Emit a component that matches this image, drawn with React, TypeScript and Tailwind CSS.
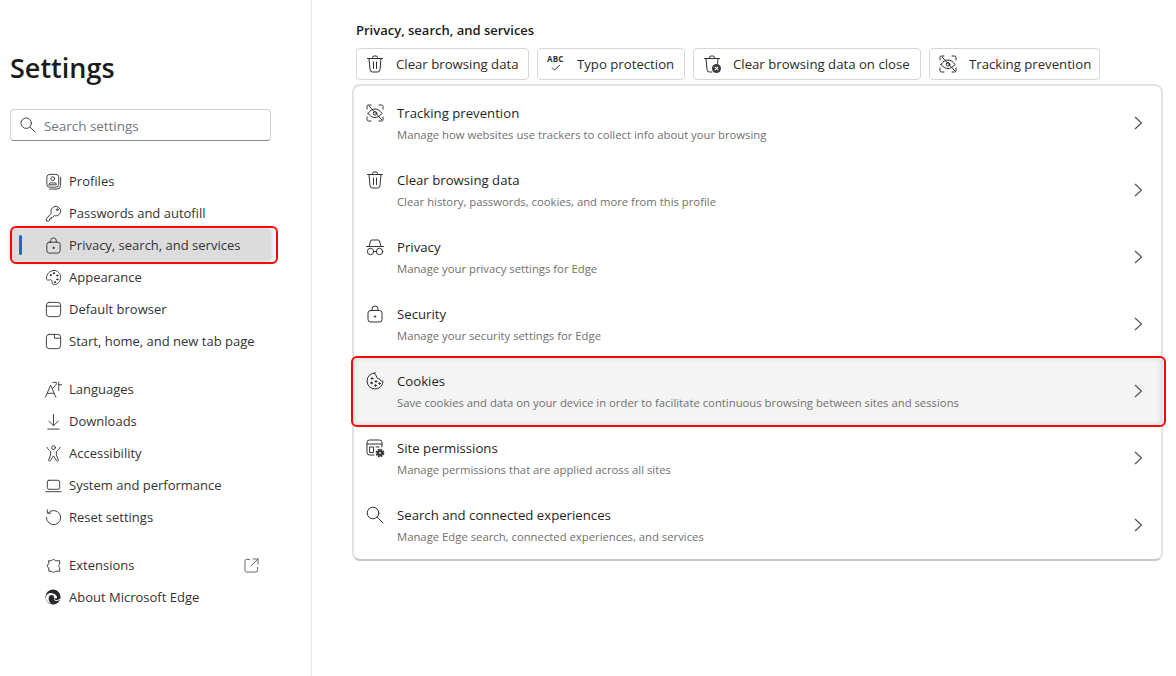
import { ReactNode } from "react";

const stroke = { fill: "none", stroke: "currentColor", strokeWidth: 1, strokeLinecap: "round" as const, strokeLinejoin: "round" as const };

function Ico({ children, size = 20 }: { children: ReactNode; size?: number }) {
  return (
    <svg width={size} height={size} viewBox="0 0 20 20" className="shrink-0" {...stroke}>
      {children}
    </svg>
  );
}

const ProfileIcon = () => (
  <Ico>
    <rect x="3" y="2.500" width="12.500" height="13.500" rx="3" />
    <path d="M17.500 5.500v8.500a4 4 0 0 1-4 4H6" />
    <circle cx="9.200" cy="7" r="2" />
    <path d="M5.500 13.500v-.5a1.500 1.500 0 0 1 1.500-1.500h4.500a1.500 1.500 0 0 1 1.500 1.500v.5H5.500z" />
  </Ico>
);
const KeyIcon = () => (
  <Ico>
    <path d="M12.500 2.500a5 5 0 0 1 0 10c-.6 0-1.100-.1-1.600-.3L9 14H7.500v1.500H6V17l-1 1H2.500v-2.500l5.300-5.800a5 5 0 0 1 4.700-7.200z" />
    <circle cx="14" cy="6" r="1" />
  </Ico>
);
const LockIcon = () => (
  <Ico>
    <rect x="3" y="6.500" width="14" height="11.500" rx="2.500" />
    <path d="M7 6.500V5a3 3 0 0 1 6 0v1.500" />
    <circle cx="10" cy="12.500" r=".7" fill="currentColor" />
  </Ico>
);
const PaletteIcon = () => (
  <Ico>
    <path d="M10.500 2.500c4 0 7 3.200 7 7.300 0 4.200-3 7.700-6.500 7.700-2.300 0-2.500-1.500-2.500-3 0-1.800-1-2.500-2.500-2-1.800.6-3.500.3-3.500-1.500 0-4.500 3.500-8.500 8.500-8.500z" />
    <circle cx="7" cy="7.500" r=".7" fill="currentColor" />
    <circle cx="10.500" cy="5.500" r=".7" fill="currentColor" />
    <circle cx="14" cy="8" r=".7" fill="currentColor" />
    <circle cx="14" cy="12" r=".7" fill="currentColor" />
    <circle cx="11.500" cy="15" r=".7" fill="currentColor" />
  </Ico>
);
const BrowserIcon = () => (
  <Ico>
    <rect x="2.500" y="2.500" width="15" height="15" rx="3" />
    <path d="M2.500 6.500h15" />
  </Ico>
);
const TabIcon = () => (
  <Ico>
    <path d="M5.500 2.500H11v4h6.500v8a3 3 0 0 1-3 3h-9a3 3 0 0 1-3-3v-9a3 3 0 0 1 3-3z" />
    <path d="M11 2.500h3.500a3 3 0 0 1 3 3v1" />
  </Ico>
);
const LangIcon = () => (
  <Ico>
    <path d="M1.500 18 7 5.500 12.500 18M3.500 14h7" />
    <path d="M9.500 2.500h3.500v1.500c0 1.500-2 2.500-3.500 4.500M15.500 2v9M15.500 5h3" />
  </Ico>
);
const DownIcon = () => (
  <Ico>
    <path d="M10 2.500v11.500M5 9.500l5 5 5-5M4 18h12" />
  </Ico>
);
const AccessIcon = () => (
  <Ico>
    <circle cx="10" cy="3.800" r="2" />
    <path d="M3 3.500c1 2 3 3.500 4 4.500v3.500L5 16.500c-.5 1.500 1 2 1.800 1L10 12.500l3.200 5c.8 1 2.300.5 1.800-1L13 11.500V8c1-1 3-2.500 4-4.500" />
  </Ico>
);
const LaptopIcon = () => (
  <Ico>
    <rect x="3.500" y="4.500" width="13" height="9.500" rx="1.800" />
    <path d="M2 16.500h16" />
  </Ico>
);
const ResetIcon = () => (
  <Ico>
    <path d="M4.500 5A7.500 7.500 0 1 1 2.500 10" />
    <path d="M3.500 2v3.500H7" />
  </Ico>
);
const PuzzleIcon = () => (
  <Ico>
    <path d="M5 5h3a2.200 2.200 0 0 1 4 0h4.500v3.500a2 2 0 0 0 0 3.500V16H12a2.200 2.200 0 0 1-4 0H5v-3.500a2.400 2.400 0 0 1 0-4.500z" />
  </Ico>
);
const EdgeIcon = () => (
  <svg width="16" height="16" viewBox="0 0 20 20" className="shrink-0">
    <circle cx="10" cy="10" r="9.500" fill="#26282b" />
    <path d="M.8 11C1.800 6.500 5 4.800 8.500 5.200c3.800.4 6.500 2.800 6.500 5.300 0 1-1 1.500-2 1.500-1.500 0-2-1-2-1.500 1-1.500-.5-3-2.500-3-2.500 0-4 2-4 4.500 0 2.500 1.500 5 3.500 6.500-3.500-.5-6.700-3.500-7.200-7.500z" fill="#fff" />
    <path d="M11 13c2 2 5.500 2 8-.5" stroke="#fff" strokeWidth="1.200" fill="none" />
  </svg>
);
const ExternalIcon = () => (
  <svg width="15" height="15" viewBox="0 0 16 16" fill="none" stroke="#5f5f5f" strokeWidth="1" strokeLinecap="round" className="shrink-0">
    <path d="M6 1.500H3A2 2 0 0 0 1 3.500v9.500a2 2 0 0 0 2 2h9.500a2 2 0 0 0 2-2V10" />
    <path d="M9.500 1H15v5.500M15 1 7.500 8.500" />
  </svg>
);
const TrashIcon = () => (
  <Ico>
    <path d="M2.500 4.500h15M7.500 4.500V3.500a1.500 1.500 0 0 1 1.500-1.500h2a1.500 1.500 0 0 1 1.500 1.500v1" />
    <path d="M4 4.500 5 15.500a2.500 2.500 0 0 0 2.500 2.500h5a2.500 2.500 0 0 0 2.500-2.500l1-11" />
    <path d="M8.500 8v6.500M11.500 8v6.500" />
  </Ico>
);
const TrashCloseIcon = () => (
  <svg width="20" height="20" viewBox="0 0 20 20" className="shrink-0">
    <g {...stroke}>
      <path d="M2.500 4.500h15M7.500 4.500V3.500a1.500 1.500 0 0 1 1.500-1.500h2a1.500 1.500 0 0 1 1.500 1.500v1" />
      <path d="M4 4.500 5 15.500a2.500 2.500 0 0 0 2.500 2.500H10M16 4.500l-.4 5" />
    </g>
    <circle cx="14.500" cy="14.500" r="4.500" fill="#3a3a3a" />
    <path d="m12.800 12.800 3.400 3.400m0-3.400-3.400 3.400" stroke="#fff" strokeWidth="1.100" />
  </svg>
);
const AbcIcon = () => (
  <span className="relative block h-[18px] w-[18px] shrink-0 text-[#333]">
    <span className="absolute -top-[1px] left-0 text-[8px] font-bold leading-[10px] tracking-[0.2px]">ABC</span>
    <svg width="10" height="7" viewBox="0 0 10 7" fill="none" stroke="currentColor" strokeWidth="1" className="absolute left-[4px] top-[9px]">
      <path d="m1 3.500 2.500 2.500L9 1" />
    </svg>
  </span>
);
const TrackIcon = () => (
  <Ico>
    <path d="M2 6V3.500A1.500 1.500 0 0 1 3.500 2H6M14 2h2.500A1.500 1.500 0 0 1 18 3.500V6M2 14v2.500A1.500 1.500 0 0 0 3.500 18H6M14 18h2.500a1.500 1.500 0 0 0 1.500-1.500V14" />
    <path d="M3 10.500c2-3 4.500-4.500 7-4.500s5 1.500 7 4.500c-2 2.500-4.500 4-7 4s-5-1.500-7-4z" />
    <circle cx="10" cy="10.300" r="1.800" />
    <path d="m4 3 13 14" />
  </Ico>
);
const SpyIcon = () => (
  <Ico>
    <path d="M4 9.500 5.500 4a1.500 1.500 0 0 1 1.500-1h6a1.500 1.500 0 0 1 1.500 1L16 9.500M1.500 9.500h17" />
    <circle cx="5.500" cy="14.500" r="3.200" />
    <circle cx="14.500" cy="14.500" r="3.200" />
    <path d="M8.700 14.500h2.600" />
  </Ico>
);
const CookieIcon = () => (
  <Ico>
    <path d="M10 2a8 8 0 1 0 8 8c-1.800.3-3.200-.5-3.500-2.200-1.800.2-3.200-1-3-3C10 4.500 9.700 3.200 10 2z" />
    <circle cx="7" cy="7.500" r=".8" fill="currentColor" />
    <circle cx="6.500" cy="12" r=".8" fill="currentColor" />
    <circle cx="11" cy="10.500" r=".8" fill="currentColor" />
    <circle cx="10.500" cy="14.500" r=".8" fill="currentColor" />
    <circle cx="14.500" cy="12.500" r=".8" fill="currentColor" />
  </Ico>
);
const SiteIcon = () => (
  <svg width="20" height="20" viewBox="0 0 20 20" className="shrink-0">
    <g {...stroke}>
      <path d="M9 17H4.500A2.500 2.500 0 0 1 2 14.500v-10A2.500 2.500 0 0 1 4.500 2h10A2.500 2.500 0 0 1 17 4.500V9M2 6h15" />
      <rect x="5" y="9" width="3.500" height="5.500" />
      <path d="M11 9h3" />
    </g>
    <circle cx="15" cy="15" r="3.200" fill="none" stroke="#333" strokeWidth="2.200" strokeDasharray="1.800 .7" />
    <circle cx="15" cy="15" r="2.800" fill="#333" />
    <circle cx="15" cy="15" r=".9" fill="#fff" />
  </svg>
);
const SearchIcon = ({ size = 18 }: { size?: number }) => (
  <Ico size={size}>
    <circle cx="8" cy="8" r="5.800" />
    <path d="m12.300 12.300 5.700 5.700" />
  </Ico>
);
const Chevron = () => (
  <svg width="9" height="14" viewBox="0 0 9 14" fill="none" stroke="#555" strokeWidth="1.200" className="shrink-0">
    <path d="m1 1 6.500 6L1 13" />
  </svg>
);

type NavItem = { label: string; icon: ReactNode; active?: boolean; external?: boolean };

const navGroups: NavItem[][] = [
  [
    { label: "Profiles", icon: <ProfileIcon /> },
    { label: "Passwords and autofill", icon: <KeyIcon /> },
    { label: "Privacy, search, and services", icon: <LockIcon />, active: true },
    { label: "Appearance", icon: <PaletteIcon /> },
    { label: "Default browser", icon: <BrowserIcon /> },
    { label: "Start, home, and new tab page", icon: <TabIcon /> },
  ],
  [
    { label: "Languages", icon: <LangIcon /> },
    { label: "Downloads", icon: <DownIcon /> },
    { label: "Accessibility", icon: <AccessIcon /> },
    { label: "System and performance", icon: <LaptopIcon /> },
    { label: "Reset settings", icon: <ResetIcon /> },
  ],
  [
    { label: "Extensions", icon: <PuzzleIcon />, external: true },
    { label: "About Microsoft Edge", icon: <EdgeIcon /> },
  ],
];

const chips = [
  { label: "Clear browsing data", icon: <TrashIcon />, w: "w-[173px]" },
  { label: "Typo protection", icon: <AbcIcon />, w: "w-[148px]" },
  { label: "Clear browsing data on close", icon: <TrashCloseIcon />, w: "w-[228px]" },
  { label: "Tracking prevention", icon: <TrackIcon />, w: "w-[171px]" },
];

const rows = [
  { title: "Tracking prevention", desc: "Manage how websites use trackers to collect info about your browsing", icon: <TrackIcon /> },
  { title: "Clear browsing data", desc: "Clear history, passwords, cookies, and more from this profile", icon: <TrashIcon /> },
  { title: "Privacy", desc: "Manage your privacy settings for Edge", icon: <SpyIcon /> },
  { title: "Security", desc: "Manage your security settings for Edge", icon: <LockIcon /> },
  { title: "Cookies", desc: "Save cookies and data on your device in order to facilitate continuous browsing between sites and sessions", icon: <CookieIcon />, active: true },
  { title: "Site permissions", desc: "Manage permissions that are applied across all sites", icon: <SiteIcon /> },
  { title: "Search and connected experiences", desc: "Manage Edge search, connected experiences, and services", icon: <SearchIcon size={20} /> },
];

export default function App() {
  return (
    <div className="flex h-[676px] w-[1176px] overflow-hidden bg-white font-['Open_Sans',sans-serif] text-[13px] text-[#333]">
      <aside className="w-[312px] shrink-0 border-r border-[#ebebeb] pt-[48px]">
        <h1 className="ml-[10px] h-[40px] text-[27px] font-semibold leading-[40px] text-[#1b1b1b]">Settings</h1>
        <div className="ml-[10px] mt-[21px] flex h-[32px] w-[261px] items-center gap-[7px] rounded-[4px] border border-[#cfcfcf] border-b-[#8a8a8a] pl-[8px]">
          <span className="text-[#333]"><SearchIcon /></span>
          <span className="pt-[2px] text-[13.4px] text-[#6e7782]">Search settings</span>
        </div>
        <nav className="ml-[12px] mt-[24px] flex w-[259px] flex-col gap-[16px]">
          {navGroups.map((group, i) => (
            <div key={i} className="flex flex-col">
              {group.map((item) => (
                <div
                  key={item.label}
                  className={`relative flex h-[32px] items-center pl-[33px] pr-[12px] ${item.active ? "rounded-[4px] bg-[#dcdcdc] shadow-[0_0_6px_rgba(0,0,0,0.25)]" : ""}`}
                >
                  {item.active && (
                    <>
                      <span className="absolute left-[7px] top-[6px] h-[20px] w-[3px] rounded-[2px] bg-[#2563d9]" />
                      <span className="absolute -bottom-[3px] -left-[2px] -right-[7px] -top-[3px] rounded-[6px] border-2 border-[#f60808]" />
                    </>
                  )}
                  <span className="flex w-[16px] justify-center text-[#3a3a3a] [&>svg:not([width='16'])]:h-[19px] [&>svg:not([width='16'])]:w-[19px]">{item.icon}</span>
                  <span className="ml-[8px] flex-1 whitespace-nowrap pt-[2px]">{item.label}</span>
                  {item.external && <ExternalIcon />}
                </div>
              ))}
            </div>
          ))}
        </nav>
      </aside>

      <main className="flex-1 pl-[40px] pt-[20px]">
        <h2 className="ml-[4px] h-[20px] text-[13px] font-semibold leading-[20px] text-[#1b1b1b]">Privacy, search, and services</h2>
        <div className="ml-[4px] mt-[8px] flex gap-[8px]">
          {chips.map((chip) => (
            <div key={chip.label} className={`flex h-[32px] items-center gap-[12px] rounded-[4px] border border-[#d6d6d6] pl-[9px] text-[13.2px] text-[#2b2b2b] ${chip.w}`}>
              <span className="flex w-[18px] justify-center">{chip.icon}</span>
              <span className="whitespace-nowrap pt-[2px]">{chip.label}</span>
            </div>
          ))}
        </div>
        <section className="mt-[4px] w-[811px] rounded-[8px] border-2 border-[#e3e3e3] border-b-[#c8c8c8] pt-[4px]">
          {rows.map((row) => (
            <div key={row.title} className={`relative flex h-[67px] items-start pl-[12px] pr-[18px] ${row.active ? "rounded-[4px] bg-[#f4f4f4] shadow-[inset_0_0_5px_rgba(0,0,0,0.12)]" : ""}`}>
              {row.active && <span className="absolute -bottom-[2px] -left-[3px] -right-[5px] -top-[2px] rounded-[6px] border-2 border-[#f60808]" />}
              <span className="mt-[13px] flex w-[18px] justify-center text-[#333]">{row.icon}</span>
              <div className="ml-[13px] flex-1 pt-[13px]">
                <div className="h-[20px] text-[13.2px] leading-[20px] text-[#1f1f1f]">{row.title}</div>
                <div className="mt-[2px] h-[20px] text-[11.3px] leading-[20px] text-[#707070]">{row.desc}</div>
              </div>
              <span className="mt-[26px]"><Chevron /></span>
            </div>
          ))}
        </section>
      </main>
    </div>
  );
}
